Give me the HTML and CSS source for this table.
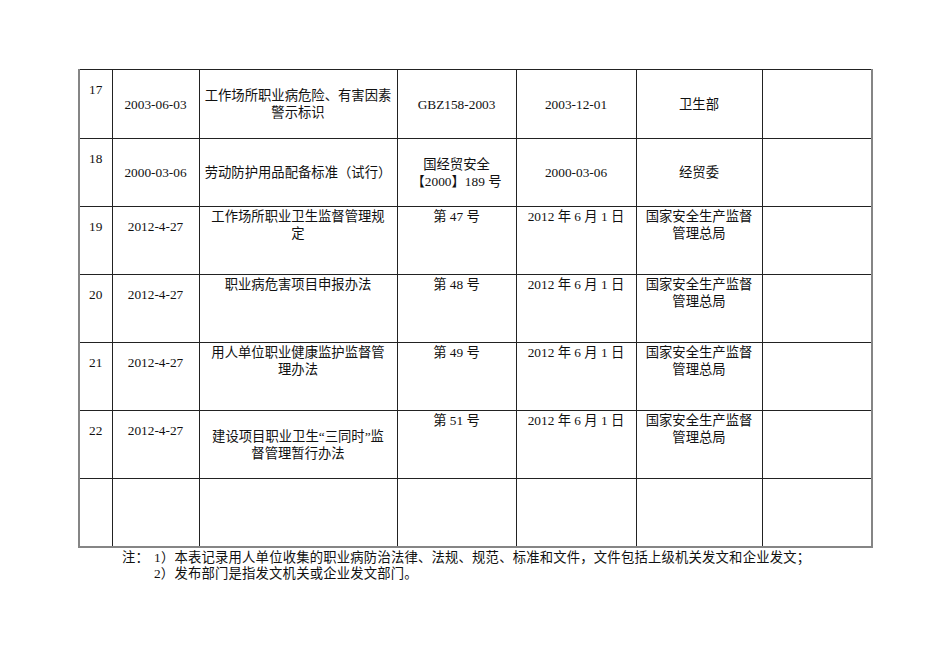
FILE: index.html
```html
<!DOCTYPE html>
<html lang="zh-CN">
<head>
<meta charset="utf-8">
<title>职业病防治法律法规</title>
<link rel="stylesheet" href="styles.css">
</head>
<body>
<div class="page">
  <table class="grid">
    <colgroup>
      <col class="c1"><col class="c2"><col class="c3"><col class="c4"><col class="c5"><col class="c6"><col class="c7">
    </colgroup>
    <tr class="r first">
      <td class="num">17</td>
      <td class="mid">2003-06-03</td>
      <td class="mid">工作场所职业病危险、有害因素<br>警示标识</td>
      <td class="mid">GBZ158-2003</td>
      <td class="mid">2003-12-01</td>
      <td class="mid">卫生部</td>
      <td></td>
    </tr>
    <tr class="r">
      <td class="num">18</td>
      <td class="mid">2000-03-06</td>
      <td class="mid">劳动防护用品配备标准（试行）</td>
      <td class="mid">国经贸安全<br>【2000】189 号</td>
      <td class="mid">2000-03-06</td>
      <td class="mid">经贸委</td>
      <td></td>
    </tr>
    <tr class="r">
      <td class="num">19</td>
      <td class="num">2012-4-27</td>
      <td class="top">工作场所职业卫生监督管理规<br>定</td>
      <td class="top">第 47 号</td>
      <td class="top">2012 年 6 月 1 日</td>
      <td class="top">国家安全生产监督<br>管理总局</td>
      <td></td>
    </tr>
    <tr class="r">
      <td class="num">20</td>
      <td class="num">2012-4-27</td>
      <td class="top">职业病危害项目申报办法</td>
      <td class="top">第 48 号</td>
      <td class="top">2012 年 6 月 1 日</td>
      <td class="top">国家安全生产监督<br>管理总局</td>
      <td></td>
    </tr>
    <tr class="r">
      <td class="num">21</td>
      <td class="num">2012-4-27</td>
      <td class="top">用人单位职业健康监护监督管<br>理办法</td>
      <td class="top">第 49 号</td>
      <td class="top">2012 年 6 月 1 日</td>
      <td class="top">国家安全生产监督<br>管理总局</td>
      <td></td>
    </tr>
    <tr class="r">
      <td class="num">22</td>
      <td class="num">2012-4-27</td>
      <td class="mid">建设项目职业卫生“三同时”监<br>督管理暂行办法</td>
      <td class="top">第 51 号</td>
      <td class="top">2012 年 6 月 1 日</td>
      <td class="top">国家安全生产监督<br>管理总局</td>
      <td></td>
    </tr>
    <tr class="r">
      <td></td><td></td><td></td><td></td><td></td><td></td><td></td>
    </tr>
  </table>
  <div class="notes">
    <p class="note"><span class="lead">注：</span>1）本表记录用人单位收集的职业病防治法律、法规、规范、标准和文件，文件包括上级机关发文和企业发文；</p>
    <p class="note second">2）发布部门是指发文机关或企业发文部门。</p>
  </div>
</div>
</body>
</html>
```

FILE: styles.css
```css
html, body {
  margin: 0;
  padding: 0;
  background: #ffffff;
}

body {
  font-family: "Liberation Serif", "Noto Sans CJK SC", serif;
  font-size: 13.33px;
  color: #111111;
}

.page {
  padding: 69px 0 0 78px;
}

.grid {
  border-collapse: collapse;
  table-layout: fixed;
  width: 795px;
  border-top: 1px solid #222222;
  border-left: 2px solid #858585;
  border-right: 2px solid #858585;
  border-bottom: 2px solid #858585;
}

.c1 { width: 33px; }
.c2 { width: 87px; }
.c3 { width: 198px; }
.c4 { width: 119px; }
.c5 { width: 120px; }
.c6 { width: 126px; }
.c7 { width: 110px; }

.grid td {
  border: 1px solid #222222;
  padding: 0 2px;
  text-align: center;
  line-height: 17px;
  white-space: nowrap;
}

.grid tr:first-child td { border-top: 1px solid #222222; }
.grid td:first-child { border-left: 2px solid #858585; }
.grid td:last-child { border-right: 2px solid #858585; }
.grid tr:last-child td { border-bottom: 2px solid #858585; }

.r { height: 68px; }
.r.first { height: 69px; }

.num {
  vertical-align: top;
  padding-top: 11px !important;
}

.mid {
  vertical-align: middle;
}

.top {
  vertical-align: top;
  padding-top: 1px !important;
}

.notes {
  margin-top: 2px;
  padding-left: 44px;
}

.note {
  margin: 0;
  line-height: 16px;
  white-space: nowrap;
  letter-spacing: 0.2px;
}

.lead {
  margin-right: 5px;
}

.note.second {
  padding-left: 32px;
}
```
